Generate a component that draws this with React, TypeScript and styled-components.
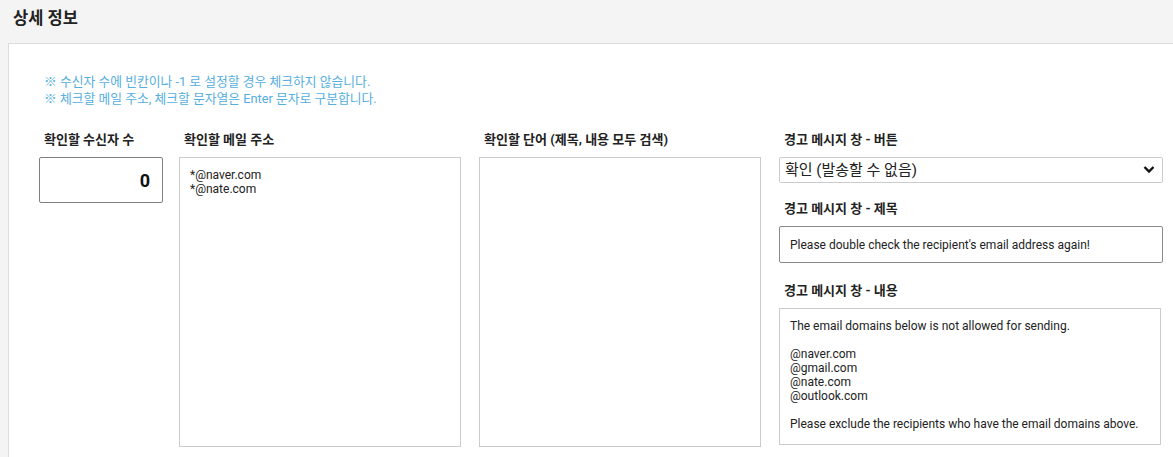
import React from 'react';
import styled, {createGlobalStyle} from 'styled-components';

const GlobalStyle = createGlobalStyle`
  html, body {
    margin: 0;
    padding: 0;
    background: #f4f4f4;
    font-family: Roboto, "Noto Sans CJK KR", sans-serif;
    color: #222;
  }
`;

const Page = styled.div`
  min-height: 457px;
  display: flex;
  flex-direction: column;
`;

const Title = styled.h2`
  margin: 0;
  height: 43px;
  padding-left: 13px;
  font-size: 16.5px;
  font-weight: 700;
  line-height: 38px;
  color: #222;
`;

const Panel = styled.div`
  flex: 1;
  margin-left: 8px;
  background: white;
  border-top: 1px solid #dcdcdc;
  border-left: 1px solid #dcdcdc;
  padding: 29px 0 10px 30px;
`;

const Notes = styled.div`
  padding-left: 5px;
  font-size: 12.8px;
  line-height: 17px;
  color: #55aee0;
`;

const Columns = styled.div`
  display: grid;
  grid-template-columns: 140px 300px 300px 384px;
  margin-top: 24px;
`;

const Col = styled.div`
  display: flex;
  flex-direction: column;
`;

const Label = styled.div<{$top?: number}>`
  padding-left: 5px;
  margin-top: ${p => p.$top || 0}px;
  margin-bottom: 8px;
  font-size: 13px;
  font-weight: 700;
  line-height: 18px;
  color: #222;
`;

const NumberInput = styled.input`
  box-sizing: border-box;
  width: 124px;
  height: 46px;
  border: 1px solid #808080;
  border-radius: 2px;
  padding: 0 12px;
  text-align: right;
  font-family: Roboto, sans-serif;
  font-size: 18px;
  font-weight: 700;
  color: #111;
  outline: none;
`;

const Area = styled.textarea<{$w: number; $h: number}>`
  box-sizing: border-box;
  width: ${p => p.$w}px;
  height: ${p => p.$h}px;
  border: 1px solid #cccccc;
  padding: 10px;
  resize: none;
  font-family: Roboto, "Noto Sans CJK KR", sans-serif;
  font-size: 12px;
  line-height: 14px;
  color: #222;
  outline: none;
  overflow: hidden;
`;

const SelectWrap = styled.div`
  position: relative;
  width: 384px;
  height: 26px;
`;

const Select = styled.select`
  box-sizing: border-box;
  appearance: none;
  width: 100%;
  height: 100%;
  border: 1px solid #cccccc;
  border-radius: 2px;
  background: white;
  padding: 0 30px 0 5px;
  font-family: Roboto, "Noto Sans CJK KR", sans-serif;
  font-size: 15px;
  color: #222;
  outline: none;
`;

const Chevron = styled.svg`
  position: absolute;
  right: 8px;
  top: 8px;
  pointer-events: none;
`;

const TextInput = styled.input`
  box-sizing: border-box;
  width: 384px;
  height: 37px;
  border: 1px solid #8a8a8a;
  border-radius: 2px;
  padding: 0 10px;
  font-family: Roboto, sans-serif;
  font-size: 12px;
  color: #222;
  outline: none;
`;

const warning = `The email domains below is not allowed for sending.

@naver.com
@gmail.com
@nate.com
@outlook.com

Please exclude the recipients who have the email domains above.`;

export default function App() {
  return (
    <Page>
      <GlobalStyle/>
      <Title>상세 정보</Title>
      <Panel>
        <Notes>
          <div>※ 수신자 수에 빈칸이나 -1 로 설정할 경우 체크하지 않습니다.</div>
          <div>※ 체크할 메일 주소, 체크할 문자열은 Enter 문자로 구분합니다.</div>
        </Notes>
        <Columns>
          <Col>
            <Label>확인할 수신자 수</Label>
            <NumberInput readOnly value="0"/>
          </Col>
          <Col>
            <Label>확인할 메일 주소</Label>
            <Area $w={282} $h={290} readOnly value={'*@naver.com\n*@nate.com'}/>
          </Col>
          <Col>
            <Label>확인할 단어 (제목, 내용 모두 검색)</Label>
            <Area $w={282} $h={290} readOnly value=""/>
          </Col>
          <Col>
            <Label>경고 메시지 창 - 버튼</Label>
            <SelectWrap>
              <Select defaultValue="confirm">
                <option value="confirm">확인 (발송할 수 없음)</option>
              </Select>
              <Chevron width="12" height="9" viewBox="0 0 12 9">
                <polyline points="1.5,2 6,6.5 10.5,2" fill="none" stroke="#111" strokeWidth="2.4"/>
              </Chevron>
            </SelectWrap>
            <Label $top={17}>경고 메시지 창 - 제목</Label>
            <TextInput readOnly value="Please double check the recipient's email address again!"/>
            <Label $top={19}>경고 메시지 창 - 내용</Label>
            <Area $w={382} $h={137} readOnly value={warning}/>
          </Col>
        </Columns>
      </Panel>
    </Page>
  );
}
